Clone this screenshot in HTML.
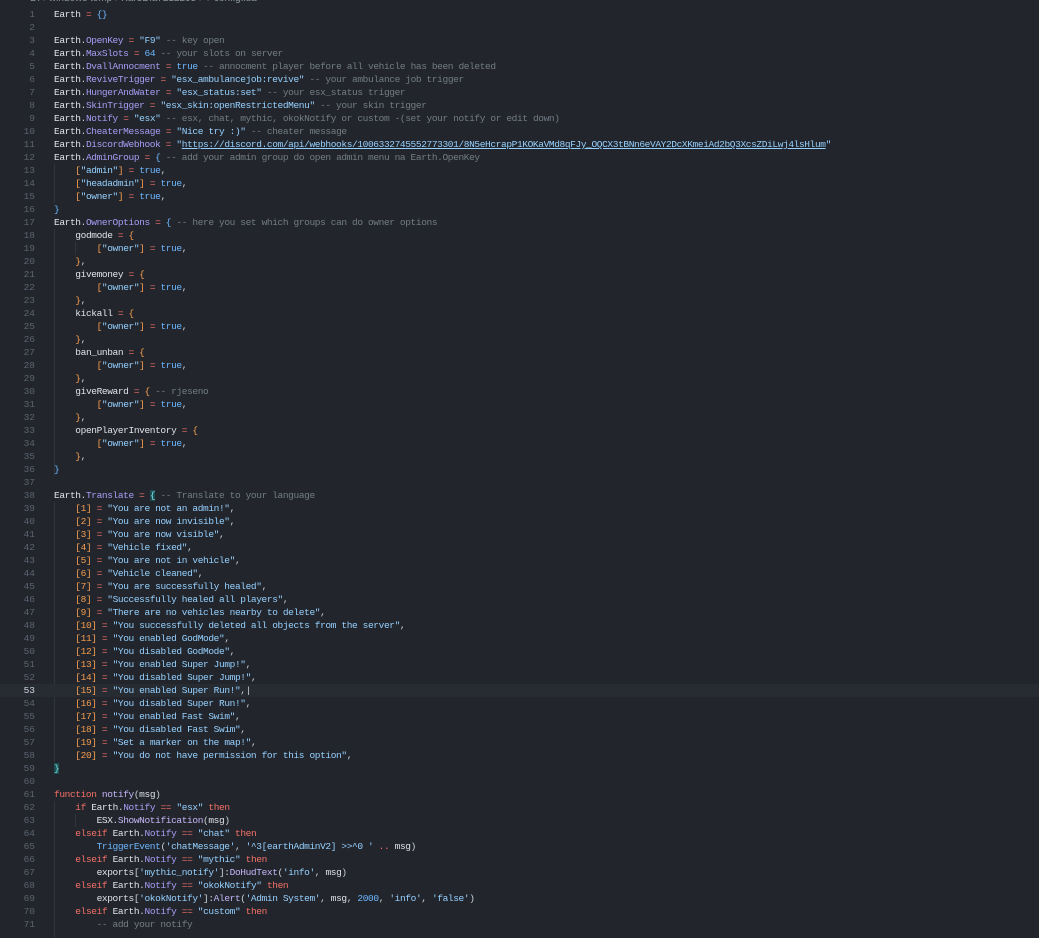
<!DOCTYPE html>
<html><head><meta charset="utf-8"><style>
html,body{margin:0;padding:0;background:#22262c;width:1039px;height:938px;overflow:hidden}
.crumb{position:absolute;left:30px;top:-7px;font:10px "Liberation Sans",sans-serif;color:#8b949e;white-space:nowrap}
.ed{position:absolute;left:0;top:8px;width:1039px;font-family:"Liberation Mono",monospace;font-size:9.5px;letter-spacing:-0.38px;line-height:13px;color:#c9d1d9}
.l{height:13px;position:relative;white-space:nowrap}
.n{position:absolute;left:0;width:35px;text-align:right;color:#5c6370;letter-spacing:0}
.t{position:absolute;left:54px;white-space:pre}
.cur{background:#272c33}
.cur .n{color:#cdd9e5}
.e{color:#dfe3e8}.p{color:#a99cf5}.o{color:#f47067}.s{color:#96d0ff}.c{color:#737c86}.u{color:#6cb6ff}.b{color:#f69d50}.k{color:#f47067}.f{color:#c5b5f7}.m{background:#1d4f52;color:#7ee0e6}.w{color:#96d0ff;text-decoration:underline}
.g{position:absolute;width:1px;background:#30353c}
</style></head><body>
<div class="crumb">D: › windows temp › Kar3Dia7212295 › ● config.lua</div>
<div class="g" style="left:54px;top:164px;height:39px"></div>
<div class="g" style="left:54px;top:229px;height:247px"></div>
<div class="g" style="left:75px;top:242px;height:13px"></div>
<div class="g" style="left:54px;top:502px;height:260px"></div>
<div class="g" style="left:54px;top:801px;height:137px"></div>
<div class="g" style="left:75px;top:814px;height:13px"></div>
<div class="ed">
<div class="l"><span class="n">1</span><span class="t"><span class="e">Earth</span> <span class="o">=</span> <span class="u">{}</span></span></div>
<div class="l"><span class="n">2</span></div>
<div class="l"><span class="n">3</span><span class="t"><span class="e">Earth</span>.<span class="p">OpenKey</span> <span class="o">=</span> <span class="s">"F9"</span> <span class="c">-- key open</span></span></div>
<div class="l"><span class="n">4</span><span class="t"><span class="e">Earth</span>.<span class="p">MaxSlots</span> <span class="o">=</span> <span class="u">64</span> <span class="c">-- your slots on server</span></span></div>
<div class="l"><span class="n">5</span><span class="t"><span class="e">Earth</span>.<span class="p">DvallAnnocment</span> <span class="o">=</span> <span class="u">true</span> <span class="c">-- annocment player before all vehicle has been deleted</span></span></div>
<div class="l"><span class="n">6</span><span class="t"><span class="e">Earth</span>.<span class="p">ReviveTrigger</span> <span class="o">=</span> <span class="s">"esx_ambulancejob:revive"</span> <span class="c">-- your ambulance job trigger</span></span></div>
<div class="l"><span class="n">7</span><span class="t"><span class="e">Earth</span>.<span class="p">HungerAndWater</span> <span class="o">=</span> <span class="s">"esx_status:set"</span> <span class="c">-- your esx_status trigger</span></span></div>
<div class="l"><span class="n">8</span><span class="t"><span class="e">Earth</span>.<span class="p">SkinTrigger</span> <span class="o">=</span> <span class="s">"esx_skin:openRestrictedMenu"</span> <span class="c">-- your skin trigger</span></span></div>
<div class="l"><span class="n">9</span><span class="t"><span class="e">Earth</span>.<span class="p">Notify</span> <span class="o">=</span> <span class="s">"esx"</span> <span class="c">-- esx, chat, mythic, okokNotify or custom -(set your notify or edit down)</span></span></div>
<div class="l"><span class="n">10</span><span class="t"><span class="e">Earth</span>.<span class="p">CheaterMessage</span> <span class="o">=</span> <span class="s">"Nice try :)"</span> <span class="c">-- cheater message</span></span></div>
<div class="l"><span class="n">11</span><span class="t"><span class="e">Earth</span>.<span class="p">DiscordWebhook</span> <span class="o">=</span> <span class="s">"</span><span class="w">https://discord.com/api/webhooks/1006332745552773301/8N5eHcrapP1KOKaVMd8qFJy_OQCX3tBNn6eVAY2DcXKmeiAd2bQ3XcsZDiLwj4lsHlum</span><span class="s">"</span></span></div>
<div class="l"><span class="n">12</span><span class="t"><span class="e">Earth</span>.<span class="p">AdminGroup</span> <span class="o">=</span> <span class="u">{</span> <span class="c">-- add your admin group do open admin menu na Earth.OpenKey</span></span></div>
<div class="l"><span class="n">13</span><span class="t">    <span class="b">[</span><span class="s">"admin"</span><span class="b">]</span> <span class="o">=</span> <span class="u">true</span>,</span></div>
<div class="l"><span class="n">14</span><span class="t">    <span class="b">[</span><span class="s">"headadmin"</span><span class="b">]</span> <span class="o">=</span> <span class="u">true</span>,</span></div>
<div class="l"><span class="n">15</span><span class="t">    <span class="b">[</span><span class="s">"owner"</span><span class="b">]</span> <span class="o">=</span> <span class="u">true</span>,</span></div>
<div class="l"><span class="n">16</span><span class="t"><span class="u">}</span></span></div>
<div class="l"><span class="n">17</span><span class="t"><span class="e">Earth</span>.<span class="p">OwnerOptions</span> <span class="o">=</span> <span class="u">{</span> <span class="c">-- here you set which groups can do owner options</span></span></div>
<div class="l"><span class="n">18</span><span class="t">    <span class="e">godmode</span> <span class="o">=</span> <span class="b">{</span></span></div>
<div class="l"><span class="n">19</span><span class="t">        <span class="b">[</span><span class="s">"owner"</span><span class="b">]</span> <span class="o">=</span> <span class="u">true</span>,</span></div>
<div class="l"><span class="n">20</span><span class="t">    <span class="b">}</span>,</span></div>
<div class="l"><span class="n">21</span><span class="t">    <span class="e">givemoney</span> <span class="o">=</span> <span class="b">{</span></span></div>
<div class="l"><span class="n">22</span><span class="t">        <span class="b">[</span><span class="s">"owner"</span><span class="b">]</span> <span class="o">=</span> <span class="u">true</span>,</span></div>
<div class="l"><span class="n">23</span><span class="t">    <span class="b">}</span>,</span></div>
<div class="l"><span class="n">24</span><span class="t">    <span class="e">kickall</span> <span class="o">=</span> <span class="b">{</span></span></div>
<div class="l"><span class="n">25</span><span class="t">        <span class="b">[</span><span class="s">"owner"</span><span class="b">]</span> <span class="o">=</span> <span class="u">true</span>,</span></div>
<div class="l"><span class="n">26</span><span class="t">    <span class="b">}</span>,</span></div>
<div class="l"><span class="n">27</span><span class="t">    <span class="e">ban_unban</span> <span class="o">=</span> <span class="b">{</span></span></div>
<div class="l"><span class="n">28</span><span class="t">        <span class="b">[</span><span class="s">"owner"</span><span class="b">]</span> <span class="o">=</span> <span class="u">true</span>,</span></div>
<div class="l"><span class="n">29</span><span class="t">    <span class="b">}</span>,</span></div>
<div class="l"><span class="n">30</span><span class="t">    <span class="e">giveReward</span> <span class="o">=</span> <span class="b">{</span> <span class="c">-- rjeseno</span></span></div>
<div class="l"><span class="n">31</span><span class="t">        <span class="b">[</span><span class="s">"owner"</span><span class="b">]</span> <span class="o">=</span> <span class="u">true</span>,</span></div>
<div class="l"><span class="n">32</span><span class="t">    <span class="b">}</span>,</span></div>
<div class="l"><span class="n">33</span><span class="t">    <span class="e">openPlayerInventory</span> <span class="o">=</span> <span class="b">{</span></span></div>
<div class="l"><span class="n">34</span><span class="t">        <span class="b">[</span><span class="s">"owner"</span><span class="b">]</span> <span class="o">=</span> <span class="u">true</span>,</span></div>
<div class="l"><span class="n">35</span><span class="t">    <span class="b">}</span>,</span></div>
<div class="l"><span class="n">36</span><span class="t"><span class="u">}</span></span></div>
<div class="l"><span class="n">37</span></div>
<div class="l"><span class="n">38</span><span class="t"><span class="e">Earth</span>.<span class="p">Translate</span> <span class="o">=</span> <span class="m">{</span> <span class="c">-- Translate to your language</span></span></div>
<div class="l"><span class="n">39</span><span class="t">    <span class="b">[1]</span> <span class="o">=</span> <span class="s">"You are not an admin!"</span>,</span></div>
<div class="l"><span class="n">40</span><span class="t">    <span class="b">[2]</span> <span class="o">=</span> <span class="s">"You are now invisible"</span>,</span></div>
<div class="l"><span class="n">41</span><span class="t">    <span class="b">[3]</span> <span class="o">=</span> <span class="s">"You are now visible"</span>,</span></div>
<div class="l"><span class="n">42</span><span class="t">    <span class="b">[4]</span> <span class="o">=</span> <span class="s">"Vehicle fixed"</span>,</span></div>
<div class="l"><span class="n">43</span><span class="t">    <span class="b">[5]</span> <span class="o">=</span> <span class="s">"You are not in vehicle"</span>,</span></div>
<div class="l"><span class="n">44</span><span class="t">    <span class="b">[6]</span> <span class="o">=</span> <span class="s">"Vehicle cleaned"</span>,</span></div>
<div class="l"><span class="n">45</span><span class="t">    <span class="b">[7]</span> <span class="o">=</span> <span class="s">"You are successfully healed"</span>,</span></div>
<div class="l"><span class="n">46</span><span class="t">    <span class="b">[8]</span> <span class="o">=</span> <span class="s">"Successfully healed all players"</span>,</span></div>
<div class="l"><span class="n">47</span><span class="t">    <span class="b">[9]</span> <span class="o">=</span> <span class="s">"There are no vehicles nearby to delete"</span>,</span></div>
<div class="l"><span class="n">48</span><span class="t">    <span class="b">[10]</span> <span class="o">=</span> <span class="s">"You successfully deleted all objects from the server"</span>,</span></div>
<div class="l"><span class="n">49</span><span class="t">    <span class="b">[11]</span> <span class="o">=</span> <span class="s">"You enabled GodMode"</span>,</span></div>
<div class="l"><span class="n">50</span><span class="t">    <span class="b">[12]</span> <span class="o">=</span> <span class="s">"You disabled GodMode"</span>,</span></div>
<div class="l"><span class="n">51</span><span class="t">    <span class="b">[13]</span> <span class="o">=</span> <span class="s">"You enabled Super Jump!"</span>,</span></div>
<div class="l"><span class="n">52</span><span class="t">    <span class="b">[14]</span> <span class="o">=</span> <span class="s">"You disabled Super Jump!"</span>,</span></div>
<div class="l cur"><span class="n">53</span><span class="t">    <span class="b">[15]</span> <span class="o">=</span> <span class="s">"You enabled Super Run!"</span>,|</span></div>
<div class="l"><span class="n">54</span><span class="t">    <span class="b">[16]</span> <span class="o">=</span> <span class="s">"You disabled Super Run!"</span>,</span></div>
<div class="l"><span class="n">55</span><span class="t">    <span class="b">[17]</span> <span class="o">=</span> <span class="s">"You enabled Fast Swim"</span>,</span></div>
<div class="l"><span class="n">56</span><span class="t">    <span class="b">[18]</span> <span class="o">=</span> <span class="s">"You disabled Fast Swim"</span>,</span></div>
<div class="l"><span class="n">57</span><span class="t">    <span class="b">[19]</span> <span class="o">=</span> <span class="s">"Set a marker on the map!"</span>,</span></div>
<div class="l"><span class="n">58</span><span class="t">    <span class="b">[20]</span> <span class="o">=</span> <span class="s">"You do not have permission for this option"</span>,</span></div>
<div class="l"><span class="n">59</span><span class="t"><span class="m">}</span></span></div>
<div class="l"><span class="n">60</span></div>
<div class="l"><span class="n">61</span><span class="t"><span class="k">function</span> <span class="f">notify</span>(<span class="e">msg</span>)</span></div>
<div class="l"><span class="n">62</span><span class="t">    <span class="k">if</span> <span class="e">Earth</span>.<span class="p">Notify</span> <span class="o">==</span> <span class="s">"esx"</span> <span class="k">then</span></span></div>
<div class="l"><span class="n">63</span><span class="t">        <span class="e">ESX</span>.<span class="f">ShowNotification</span>(<span class="e">msg</span>)</span></div>
<div class="l"><span class="n">64</span><span class="t">    <span class="k">elseif</span> <span class="e">Earth</span>.<span class="p">Notify</span> <span class="o">==</span> <span class="s">"chat"</span> <span class="k">then</span></span></div>
<div class="l"><span class="n">65</span><span class="t">        <span class="u">TriggerEvent</span>(<span class="s">'chatMessage'</span>, <span class="s">'^3[earthAdminV2] &gt;&gt;^0 '</span> <span class="o">..</span> <span class="e">msg</span>)</span></div>
<div class="l"><span class="n">66</span><span class="t">    <span class="k">elseif</span> <span class="e">Earth</span>.<span class="p">Notify</span> <span class="o">==</span> <span class="s">"mythic"</span> <span class="k">then</span></span></div>
<div class="l"><span class="n">67</span><span class="t">        <span class="e">exports</span>[<span class="s">'mythic_notify'</span>]:<span class="f">DoHudText</span>(<span class="s">'info'</span>, <span class="e">msg</span>)</span></div>
<div class="l"><span class="n">68</span><span class="t">    <span class="k">elseif</span> <span class="e">Earth</span>.<span class="p">Notify</span> <span class="o">==</span> <span class="s">"okokNotify"</span> <span class="k">then</span></span></div>
<div class="l"><span class="n">69</span><span class="t">        <span class="e">exports</span>[<span class="s">'okokNotify'</span>]:<span class="f">Alert</span>(<span class="s">'Admin System'</span>, <span class="e">msg</span>, <span class="u">2000</span>, <span class="s">'info'</span>, <span class="s">'false'</span>)</span></div>
<div class="l"><span class="n">70</span><span class="t">    <span class="k">elseif</span> <span class="e">Earth</span>.<span class="p">Notify</span> <span class="o">==</span> <span class="s">"custom"</span> <span class="k">then</span></span></div>
<div class="l"><span class="n">71</span><span class="t">        <span class="c">-- add your notify</span></span></div>
</div>
</body></html>
